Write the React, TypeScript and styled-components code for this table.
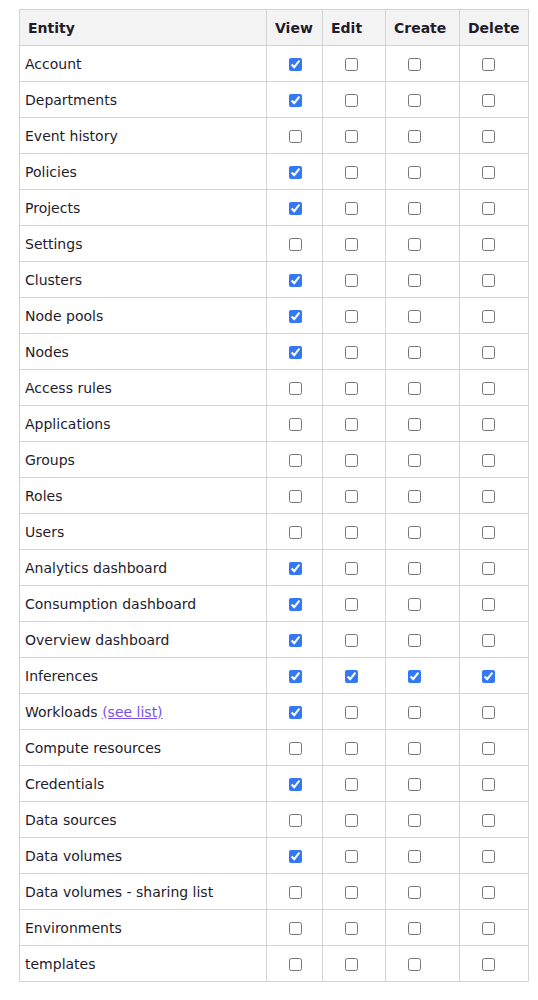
import React from "react";
import styled, { createGlobalStyle } from "styled-components";

const Global = createGlobalStyle`
  html, body { margin: 0; padding: 0; background: #ffffff; }
  body { font-family: "DejaVu Sans", Verdana, sans-serif; color: #1f1c2c; }
`;

const Page = styled.div`
  padding: 9px 10px 0 19px;
`;

const Table = styled.table`
  border-collapse: collapse;
  table-layout: fixed;
  width: 509px;
  font-size: 14px;
`;

const Th = styled.th<{ $w: number }>`
  box-sizing: border-box;
  width: ${(p) => p.$w}px;
  height: 36px;
  padding: 0 8px;
  text-align: left;
  font-weight: bold;
  background: #f3f3f3;
  border: 1px solid #d3d3d3;
`;

const Td = styled.td`
  height: 35px;
  padding: 0 5px;
  border: 1px solid #d3d3d3;
  vertical-align: middle;
`;

const CheckCell = styled(Td)`
  text-align: left;
  padding: 0 0 0 22px;
`;

const Box = styled.input`
  width: 13px;
  height: 13px;
  margin: 0;
  vertical-align: middle;
  accent-color: #3478f6;
`;

const Link = styled.a`
  color: #7b4fe6;
  text-decoration: underline;
  cursor: pointer;
`;

type Row = { name: string; p: [number, number, number, number]; link?: boolean };

const rows: Row[] = [
  { name: "Account", p: [1, 0, 0, 0] },
  { name: "Departments", p: [1, 0, 0, 0] },
  { name: "Event history", p: [0, 0, 0, 0] },
  { name: "Policies", p: [1, 0, 0, 0] },
  { name: "Projects", p: [1, 0, 0, 0] },
  { name: "Settings", p: [0, 0, 0, 0] },
  { name: "Clusters", p: [1, 0, 0, 0] },
  { name: "Node pools", p: [1, 0, 0, 0] },
  { name: "Nodes", p: [1, 0, 0, 0] },
  { name: "Access rules", p: [0, 0, 0, 0] },
  { name: "Applications", p: [0, 0, 0, 0] },
  { name: "Groups", p: [0, 0, 0, 0] },
  { name: "Roles", p: [0, 0, 0, 0] },
  { name: "Users", p: [0, 0, 0, 0] },
  { name: "Analytics dashboard", p: [1, 0, 0, 0] },
  { name: "Consumption dashboard", p: [1, 0, 0, 0] },
  { name: "Overview dashboard", p: [1, 0, 0, 0] },
  { name: "Inferences", p: [1, 1, 1, 1] },
  { name: "Workloads", p: [1, 0, 0, 0], link: true },
  { name: "Compute resources", p: [0, 0, 0, 0] },
  { name: "Credentials", p: [1, 0, 0, 0] },
  { name: "Data sources", p: [0, 0, 0, 0] },
  { name: "Data volumes", p: [1, 0, 0, 0] },
  { name: "Data volumes - sharing list", p: [0, 0, 0, 0] },
  { name: "Environments", p: [0, 0, 0, 0] },
  { name: "templates", p: [0, 0, 0, 0] },
];

const headers: [string, number][] = [
  ["Entity", 247],
  ["View", 56],
  ["Edit", 63],
  ["Create", 74],
  ["Delete", 69],
];

export default function App() {
  return (
    <>
      <Global />
      <Page>
        <Table>
          <thead>
            <tr>
              {headers.map(([h, w]) => (
                <Th key={h} $w={w}>{h}</Th>
              ))}
            </tr>
          </thead>
          <tbody>
            {rows.map((r) => (
              <tr key={r.name}>
                <Td>
                  {r.name}
                  {r.link && (
                    <>
                      {" "}
                      <Link>(see list)</Link>
                    </>
                  )}
                </Td>
                {r.p.map((v, i) => (
                  <CheckCell key={i}>
                    <Box type="checkbox" defaultChecked={!!v} />
                  </CheckCell>
                ))}
              </tr>
            ))}
          </tbody>
        </Table>
      </Page>
    </>
  );
}
